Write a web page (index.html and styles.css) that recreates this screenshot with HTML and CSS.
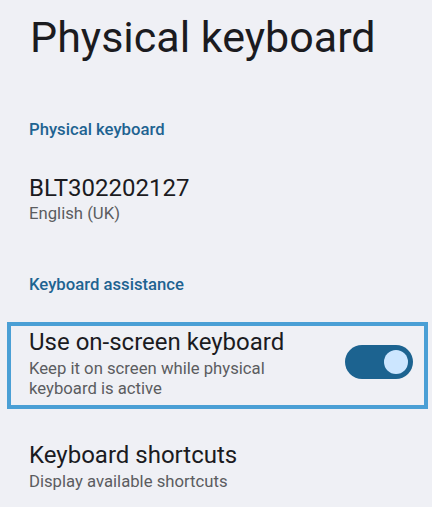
FILE: index.html
```html
<!DOCTYPE html>
<html lang="en">
<head>
  <meta charset="UTF-8" />
  <meta name="viewport" content="width=device-width, initial-scale=1.0"/>
  <title>Physical keyboard</title>
  <link rel="stylesheet" href="styles.css">
</head>
<body>

  <header>
    <h1>Physical keyboard</h1>
  </header>

  <div class="section first">
    <h2>Physical keyboard</h2>
    <div class="item">
      <div class="item-text">
        <div class="item-title">BLT302202127</div>
        <div class="item-sub">English (UK)</div>
      </div>
    </div>
  </div>

  <div class="section">
    <h2>Keyboard assistance</h2>
    <div class="item highlight">
      <div class="item-text">
        <div class="item-title">Use on-screen keyboard</div>
        <div class="item-sub">Keep it on screen while physical keyboard is active</div>
      </div>
      <div class="toggle on"><span class="knob"></span></div>
    </div>
    <div class="item">
      <div class="item-text">
        <div class="item-title">Keyboard shortcuts</div>
        <div class="item-sub">Display available shortcuts</div>
      </div>
    </div>
  </div>

</body>
</html>
```

FILE: styles.css
```css
body {
  font-family: Roboto, "Noto Sans", sans-serif;
  background: #eff0f5;
  margin: 0;
  padding: 0;
  color: #1b1b1f;
}
header {
  padding: 11px 30px 0;
}
h1 {
  margin: 0;
  font-size: 43px;
  font-weight: 400;
  line-height: 52px;
}
h2 {
  margin: 0;
  padding: 0 29px;
  font-size: 16.7px;
  font-weight: 500;
  color: #1e6391;
  line-height: 20px;
}
.section {
  padding-top: 51px;
}
.section.first {
  padding-top: 57px;
}
.item {
  display: flex;
  align-items: flex-start;
  padding: 31px 16px 0 29px;
}
.section.first .item {
  padding-top: 33px;
}
.item-text {
  flex: 1;
}
.item-title {
  font-size: 24px;
  line-height: 30px;
}
.item-sub {
  font-size: 16.7px;
  line-height: 20px;
  margin-top: 2px;
  color: #5b5c60;
  max-width: 280px;
}
.section.first .item-sub {
  margin-top: 1px;
}
.toggle {
  width: 68px;
  height: 34px;
  margin-top: 18px;
  border-radius: 17px;
  background: #1c6390;
  display: flex;
  align-items: center;
  justify-content: flex-end;
  padding: 0 5px;
  box-sizing: border-box;
}
.knob {
  width: 24px;
  height: 24px;
  border-radius: 50%;
  background: #cce6ff;
}
.highlight {
  border: 4px solid #4a9fd5;
  margin: 27px 4px 0 7px;
  padding: 1px 11px 6px 18px;
}
```
